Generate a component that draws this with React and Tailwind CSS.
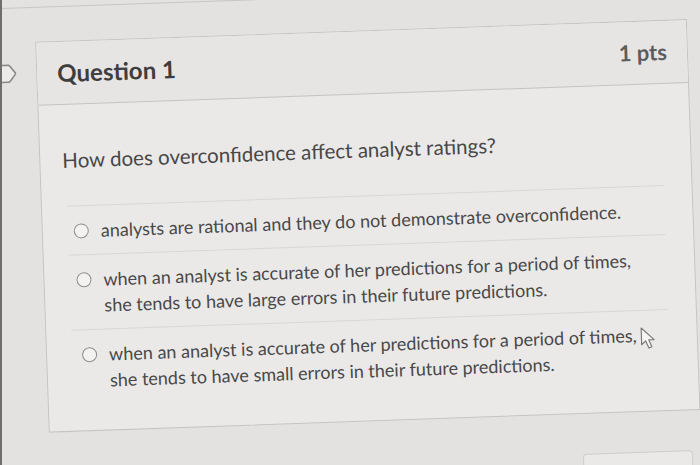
import React from "react";

function Radio() {
  return (
    <span className="mt-[6px] h-[15px] w-[15px] shrink-0 rounded-full border-[1.5px] border-[#8e8d8c] bg-[#f3f2f1]" />
  );
}

function Cursor() {
  return (
    <svg width="17" height="23" viewBox="0 0 14 20" className="block">
      <path
        d="M1 1 L1 15.5 L4.6 12.3 L7.2 18.6 L9.8 17.5 L7.3 11.4 L12 11.4 Z"
        fill="#f6f5f4"
        stroke="#7a7978"
        strokeWidth="1"
        strokeLinejoin="round"
      />
    </svg>
  );
}

function Flag() {
  return (
    <svg width="24" height="20" viewBox="0 0 24 20" className="block">
      <path
        d="M-4 1.5 H14 Q15 1.5 15.6 2.3 L21 9.2 Q21.5 10 21 10.8 L15.6 17.7 Q15 18.5 14 18.5 H-4"
        fill="#ecebea"
        stroke="#8a8988"
        strokeWidth="1.6"
      />
    </svg>
  );
}

const answers = [
  { text: "analysts are rational and they do not demonstrate overconfidence.", pad: "pl-[6px]" },
  {
    text: "when an analyst is accurate of her predictions for a period of times, she tends to have large errors in their future predictions.",
    pad: "pl-[7px]",
  },
  {
    text: "when an analyst is accurate of her predictions for a period of times, she tends to have small errors in their future predictions.",
    pad: "pl-[10px]",
  },
];

export default function App() {
  return (
    <div className="relative h-[465px] w-[700px] overflow-hidden border-l-2 border-[#6f6e6d] bg-[#e4e2e1] font-['Lato',sans-serif]">
      <div className="-ml-[32px] -mt-[30px] flex h-[525px] w-[760px] rotate-[-2deg] flex-col pl-[30px]">
        <div className="h-[27px] shrink-0 border-b border-[#c9c7c6]" />
        <div className="mt-[34px] flex">
          <div className="w-[42px] shrink-0 pt-[21px]">
            <Flag />
          </div>
          <div className="flex h-[391px] w-[652px] shrink-0 flex-col border border-[#c6c4c3] bg-[#ebe9e8]">
            <div className="flex h-[63px] shrink-0 items-center justify-between border-b border-[#c6c4c3] bg-[#e7e5e4] px-[20px]">
              <span className="text-[24px] font-bold leading-none text-[#3e3e3e]">Question 1</span>
              <span className="text-[22px] font-bold leading-none text-[#5c5c5c]">1 pts</span>
            </div>
            <p className="pl-[22px] pt-[41px] text-[20.5px] leading-[28px] text-[#474747]">
              How does overconfidence affect analyst ratings?
            </p>
            <div className="ml-[25px] mr-[28px] mt-[32px] flex flex-col">
              {answers.map((a, i) => (
                <div
                  key={i}
                  className={`relative flex items-start gap-[12px] border-t border-[#d9d7d6] py-[11px] ${a.pad}`}
                >
                  <Radio />
                  <span className="max-w-[540px] text-[18px] leading-[26px] text-[#484848]">{a.text}</span>
                  {i === 2 && (
                    <span className="absolute left-[568px] top-[16px]">
                      <Cursor />
                    </span>
                  )}
                </div>
              ))}
            </div>
          </div>
        </div>
        <div className="ml-[575px] mt-[40px] h-[36px] w-[110px] shrink-0 rounded-[4px] border border-[#cfcdcc] bg-[#ebe9e8]" />
      </div>
    </div>
  );
}
